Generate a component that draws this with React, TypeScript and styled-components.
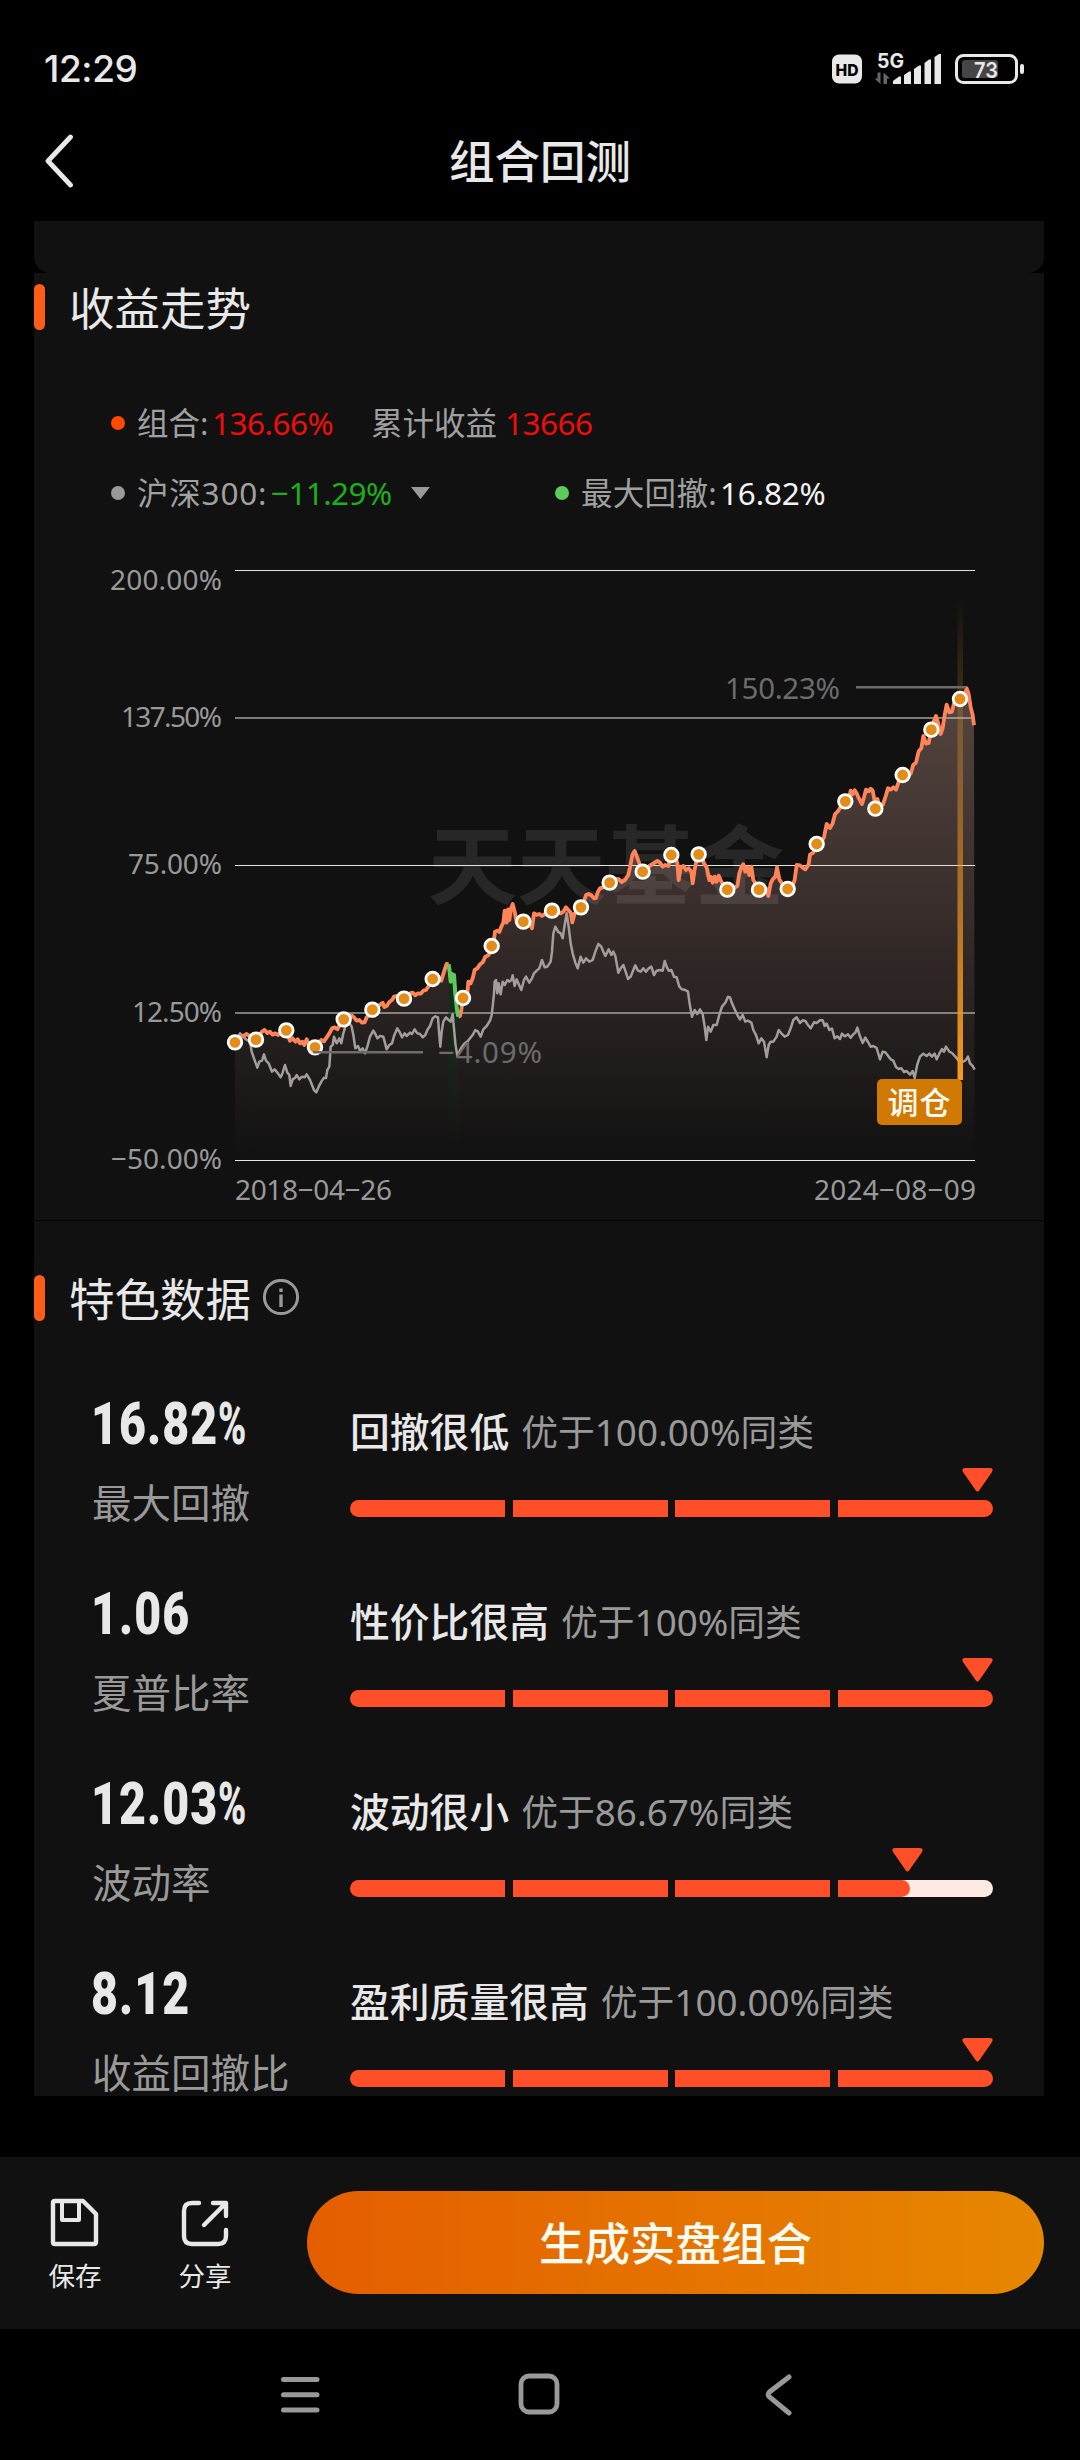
import React from "react";
import styled, { createGlobalStyle } from "styled-components";

const GlobalStyle = createGlobalStyle`
  * { box-sizing: border-box; }
  html, body { margin: 0; padding: 0; background: #000; }
  body {
    font-family: "Noto Sans", "Noto Sans CJK SC", sans-serif;
    color: #e8e8e8;
  }
`;

const Screen = styled.div`
  width: 1080px;
  height: 2460px;
  background: #000;
  display: flex;
  flex-direction: column;
  overflow: hidden;
`;

const StatusBar = styled.div`
  height: 120px;
  padding: 17px 54px 0 44px;
  display: flex;
  align-items: center;
  justify-content: space-between;
`;

const Clock = styled.span`
  font-family: Inter, sans-serif;
  font-size: 37px;
  font-weight: 500;
  letter-spacing: -0.4px;
  line-height: 40px;
`;

const Header = styled.header`
  height: 101px;
  padding: 0 45px 20px;
  display: grid;
  grid-template-columns: 120px 1fr 120px;
  align-items: center;
`;

const PageTitle = styled.h1`
  margin: 0;
  font-size: 45.5px;
  line-height: 60px;
  font-weight: 500;
  text-align: center;
`;

const Scroll = styled.main`
  height: 1875px;
  padding: 0 36px 0 34px;
  flex: none;
`;

const CardTail = styled.div`
  height: 52px;
  background: #111;
  border-radius: 0 0 16px 16px;
`;

const Section = styled.section<{ $top: number }>`
  background: #111;
  padding-top: ${(p) => p.$top}px;
`;

const Divider = styled.div`
  height: 1px;
  background: #000;
`;

const SectionHead = styled.div`
  height: 46px;
  display: flex;
  align-items: center;
`;

const Accent = styled.span`
  width: 11px;
  height: 46px;
  border-radius: 5.5px;
  background: #ff5c17;
  margin-right: 24px;
`;

const SectionTitle = styled.h2`
  margin: 0 11px 0 0;
  padding-top: 2px;
  font-size: 45.5px;
  font-weight: 400;
  line-height: 46px;
`;

const Legend = styled.div`
  padding: 68px 0 22px 77px;
  display: grid;
  row-gap: 20px;
`;

const LegendRow = styled.div`
  height: 50px;
  display: flex;
  align-items: center;
  font-size: 31.5px;
  line-height: 50px;
  white-space: pre;
`;

const Dot = styled.i<{ $color: string }>`
  width: 14px;
  height: 14px;
  border-radius: 50%;
  background: ${(p) => p.$color};
  margin-right: 12px;
`;

const LegendItem = styled.div<{ $width?: number }>`
  display: flex;
  align-items: center;
  width: ${(p) => (p.$width ? `${p.$width}px` : "auto")};
`;

const LegendName = styled.span<{ $width: number; $spacing?: number }>`
  color: #a0a0a0;
  width: ${(p) => p.$width}px;
  letter-spacing: ${(p) => p.$spacing ?? 0}px;
`;

const LegendValue = styled.span<{ $color: string; $spacing?: number }>`
  color: ${(p) => p.$color};
  letter-spacing: ${(p) => p.$spacing ?? -0.5}px;
  margin-right: 19px;
`;

const ChartSvg = styled.svg`
  display: block;
  font-family: "Noto Sans", "Noto Sans CJK SC", sans-serif;
`;

const Metrics = styled.div`
  padding: 68px 51px 0 58px;
`;

const Metric = styled.div`
  height: 190px;
  display: grid;
  grid-template-columns: 258px 643px;

  &:last-child { height: 137px; }
`;

const Value = styled.div`
  height: 68px;
  line-height: 69px;
  margin-left: -1px;
  font-family: Roboto, sans-serif;
  font-size: 60px;
  font-weight: 900;
  letter-spacing: 1.4px;
  white-space: nowrap;
  transform: scaleX(0.775);
  transform-origin: left center;
`;

const Percent = styled.span`
  display: inline-block;
  transform: scaleX(0.82);
  transform-origin: left center;
`;

const Label = styled.div`
  margin-top: 23px;
  height: 46px;
  line-height: 46px;
  font-size: 39.5px;
  color: #999;
  white-space: nowrap;
`;

const Verdict = styled.div`
  margin-top: 15px;
  height: 56px;
  display: flex;
  align-items: center;
  gap: 12px;
  line-height: 56px;
  white-space: nowrap;
`;

const VerdictTitle = styled.strong`
  font-size: 39.8px;
  font-weight: 500;
`;

const VerdictNote = styled.span`
  font-size: 36.8px;
  color: #999;
`;

const PointerTrack = styled.div`
  margin-top: 8px;
  height: 24px;
  display: flex;
`;

const Bar = styled.div`
  margin-top: 8px;
  height: 17px;
  border-radius: 8.5px;
  overflow: hidden;
  display: grid;
  grid-template-columns: repeat(4, 155px);
  justify-content: space-between;
`;

const Segment = styled.div`
  background: #fdebe3;
`;

const Fill = styled.div<{ $partial: boolean }>`
  height: 17px;
  background: #ff4f28;
  border-radius: ${(p) => (p.$partial ? "0 8.5px 8.5px 0" : "0")};
`;

const ActionBar = styled.footer`
  margin-top: 61px;
  height: 172px;
  flex: none;
  background: #111;
  padding: 34px 36px 0 46px;
  display: flex;
`;

const Action = styled.div<{ $gap: number }>`
  width: 58px;
  margin-right: ${(p) => p.$gap}px;
  display: flex;
  flex-direction: column;
  align-items: center;
  font-size: 26.5px;
  line-height: 36px;
  white-space: nowrap;

  svg { margin: 5px 0 8px; }
`;

const PrimaryButton = styled.button`
  width: 737px;
  height: 103px;
  border: 0;
  padding: 0 0 3px;
  border-radius: 52px;
  background: linear-gradient(90deg, #e45e00, #e68700);
  color: #fffaf0;
  font-family: inherit;
  font-size: 45.5px;
  font-weight: 500;
`;

const NavBar = styled.nav`
  height: 131px;
  padding: 0 286px 0 278px;
  display: grid;
  grid-template-columns: 238px 1fr 30px;
  align-items: center;
`;

/* Curve samples, three units per pixel, counted from the plot's (220, 780). */
const BEFORE_DROP =
  "45,787 62,772 80,762 95,772 108,779 118,765 126,755 134,750 142,759 150,755 158,764 166,760 174,765 182,758 190,762 199,751 205,770 210,782 218,775 226,785 233,778 240,790 247,785 253,795 260,778 266,792 274,790 285,802 296,788 304,780 312,784 320,772 328,760 336,745 344,742 352,748 360,735 371,718 385,712 395,706 402,712 410,722 418,720 426,728 434,727 440,712 448,705 457,689 470,685 480,674 488,668 493,681 500,678 508,666 516,660 522,650 532,648 542,645 552,656 560,650 570,640 578,638 586,646 594,640 602,641 610,632 618,630 626,618 638,597 650,600 658,596 664,602 672,575 680,552 686,553";
const DROP = "686,553 689,575 692,605 696,582 699,600 702,585 706,640 711,690 715,710";
const AFTER_DROP =
  "715,710 720,708 724,690 729,654 735,660 742,640 745,605 752,610 758,595 764,570 772,565 780,553 788,547 796,530 806,525 815,498 822,478 825,455 832,452 838,456 844,440 850,428 854,392 860,428 864,388 868,420 873,385 878,372 884,395 890,428 910,425 920,428 930,430 936,445 942,400 950,405 958,402 966,408 974,402 984,405 996,392 1010,397 1022,400 1030,395 1038,382 1045,390 1052,398 1057,427 1064,400 1072,395 1083,382 1090,370 1098,345 1106,342 1114,346 1122,355 1128,354 1134,335 1140,325 1150,322 1160,315 1169,308 1182,298 1195,297 1205,306 1215,300 1225,285 1230,262 1237,225 1244,213 1250,228 1256,245 1262,262 1268,275 1278,268 1288,258 1298,252 1305,247 1312,243 1320,248 1328,260 1335,255 1345,258 1354,225 1366,232 1372,250 1376,300 1382,262 1390,258 1398,270 1406,265 1414,275 1418,310 1424,268 1430,240 1436,223 1446,232 1452,250 1460,262 1468,300 1472,290 1478,308 1484,290 1490,305 1496,287 1502,300 1508,312 1522,329 1535,325 1545,322 1552,318 1558,280 1564,262 1570,253 1576,275 1582,262 1588,285 1594,260 1600,300 1608,312 1617,329 1630,320 1638,325 1645,348 1652,310 1658,298 1666,290 1671,262 1678,298 1686,310 1694,325 1703,327 1716,322 1724,300 1730,255 1740,256 1748,263 1756,268 1766,253 1770,224 1780,218 1790,192 1802,187 1812,172 1820,132 1830,144 1838,130 1845,103 1855,92 1865,75 1876,64 1888,52 1892,32 1898,43 1904,31 1910,40 1916,54 1926,72 1932,52 1938,29 1946,34 1952,26 1958,32 1964,63 1972,57 1978,75 1988,75 1996,52 2004,25 2012,29 2020,22 2028,29 2036,6 2048,-15 2060,-17 2072,-19 2080,-46 2088,-52 2096,-86 2104,-95 2110,-132 2118,-109 2126,-111 2134,-151 2142,-178 2148,-192 2154,-172 2162,-138 2168,-155 2174,-195 2180,-226 2188,-203 2196,-205 2202,-230 2210,-233 2220,-243 2232,-252 2240,-275 2246,-258 2252,-218 2258,-195 2262,-164";
const INDEX =
  "45,787 52,775 60,760 68,768 78,778 90,785 95,815 102,835 112,863 118,845 126,842 132,823 138,842 146,850 156,875 164,868 174,880 182,892 188,878 195,855 202,878 208,885 212,918 218,898 226,893 230,885 238,898 246,890 254,892 260,883 270,900 276,915 282,930 289,937 296,920 304,905 312,893 318,894 322,870 328,860 332,800 338,795 342,770 350,790 358,775 364,790 370,760 376,740 388,728 395,740 400,765 406,805 414,798 420,812 428,805 435,820 442,800 450,770 460,752 466,762 472,775 480,768 490,770 500,808 508,795 516,790 522,768 532,745 540,758 546,772 554,760 560,768 570,758 576,762 584,748 592,760 600,762 608,772 616,765 622,750 630,738 638,715 646,709 654,712 657,755 661,800 665,755 670,725 678,712 686,720 692,725 698,702 702,745 706,790 712,828 718,815 726,800 734,790 742,785 750,775 758,765 766,750 774,755 782,770 790,748 800,738 810,722 815,705 818,680 822,640 824,605 828,600 832,640 836,610 842,643 848,605 854,615 862,600 868,605 874,600 878,586 884,618 890,598 896,612 904,630 912,600 918,590 928,608 936,595 942,580 950,572 958,565 966,540 974,562 982,560 992,545 996,515 1000,460 1006,440 1014,455 1022,460 1028,475 1034,435 1040,400 1046,440 1052,490 1058,520 1066,548 1073,565 1082,530 1090,548 1098,535 1108,545 1118,540 1126,515 1135,492 1144,500 1150,515 1156,528 1166,508 1174,525 1180,515 1186,528 1195,578 1202,565 1210,555 1218,578 1224,597 1232,590 1240,570 1246,556 1254,572 1262,575 1270,565 1278,575 1286,565 1294,560 1302,585 1310,572 1320,570 1328,572 1334,543 1340,560 1346,572 1354,570 1362,590 1370,592 1378,620 1386,628 1396,630 1404,635 1408,665 1416,710 1424,690 1432,702 1440,688 1448,702 1454,740 1459,780 1464,740 1472,755 1480,735 1490,735 1498,705 1506,680 1516,668 1524,650 1530,652 1536,670 1544,688 1552,705 1560,718 1568,705 1576,725 1584,722 1594,728 1600,750 1608,765 1616,790 1624,775 1632,785 1640,832 1646,795 1652,785 1660,785 1670,770 1676,750 1684,760 1694,770 1704,765 1712,745 1720,720 1730,712 1740,729 1748,721 1756,723 1764,735 1772,745 1782,727 1790,729 1800,721 1808,721 1814,738 1820,731 1828,750 1836,746 1844,775 1852,769 1860,777 1866,761 1874,769 1884,763 1892,773 1900,763 1906,758 1912,743 1920,769 1928,789 1936,773 1944,786 1952,800 1960,798 1970,804 1980,838 1988,815 1996,817 2004,827 2012,838 2020,842 2028,861 2036,867 2044,865 2052,876 2060,873 2070,884 2078,873 2084,894 2092,853 2100,830 2110,821 2120,828 2128,821 2136,830 2144,821 2150,838 2158,821 2166,807 2172,815 2178,800 2188,815 2196,819 2206,830 2216,842 2226,846 2236,842 2244,830 2250,850 2258,858 2264,869";

const REBALANCES = [
  [45, 787], [108, 779], [199, 751], [285, 802], [371, 718], [457, 689], [552, 656], [638, 597],
  [729, 654], [815, 498], [910, 425], [996, 392], [1083, 382], [1169, 308], [1268, 275], [1354, 225],
  [1436, 223], [1522, 329], [1617, 329], [1703, 327], [1790, 192], [1876, 64], [1966, 86],
  [2048, -15], [2134, -151], [2220, -243],
];

const AXIS = [
  { label: "200.00%", y: 570.5, base: 590, width: 112 },
  { label: "137.50%", y: 718, base: 726.5, width: 101 },
  { label: "75.00%", y: 865.5, base: 873.5, width: 94 },
  { label: "12.50%", y: 1013, base: 1021.5, width: 90 },
  { label: "−50.00%", y: 1160.5, base: 1169, width: 111 },
];

function TrendChart() {
  return (
    <ChartSvg width="1010" height="680" viewBox="34 540 1010 680">
      <defs>
        <linearGradient id="area" gradientUnits="userSpaceOnUse" x1="0" y1="-280" x2="0" y2="1140">
          <stop offset="0" stopColor="#ffc4ae" stopOpacity="0.29" />
          <stop offset="0.5" stopColor="#ffc0b0" stopOpacity="0.155" />
          <stop offset="1" stopColor="#ffc4ae" stopOpacity="0" />
        </linearGradient>
        <linearGradient id="dropBand" x1="0" y1="0" x2="0" y2="1">
          <stop offset="0" stopColor="#0c3018" stopOpacity="0.75" />
          <stop offset="1" stopColor="#0c3018" stopOpacity="0" />
        </linearGradient>
        <linearGradient id="beam" x1="0" y1="0" x2="0" y2="1">
          <stop offset="0" stopColor="#f79a20" stopOpacity="0" />
          <stop offset="1" stopColor="#f79a20" />
        </linearGradient>
      </defs>

      <text x="428" y="898" fontSize="86" fontWeight="700" fill="#fff" fillOpacity="0.095" textLength="356" lengthAdjust="spacingAndGlyphs">
        天天基金
      </text>

      {AXIS.map((a) => (
        <g key={a.label}>
          <text x={222 - a.width} y={a.base} fontSize="28" fill="#999" textLength={a.width}>
            {a.label}
          </text>
          <line x1="235" x2="975" y1={a.y} y2={a.y} stroke="#e4e4e4" strokeWidth="1.1" />
        </g>
      ))}

      <g transform="translate(220 780) scale(0.33333)" fill="none" strokeLinejoin="round">
        <path d={`M45,1140 L${BEFORE_DROP} ${DROP} ${AFTER_DROP} L2264,1140Z`} fill="url(#area)" />
        <path d="M685,553 L692,605 L702,590 L715,710 V1100 H685Z" fill="url(#dropBand)" />
        <polyline points={INDEX} stroke="#a39e9b" strokeWidth="7.5" />
        <polyline points={BEFORE_DROP} stroke="#ff8458" strokeWidth="11.5" />
        <polyline points={AFTER_DROP} stroke="#ff8458" strokeWidth="11.5" />
        <polyline points={DROP} stroke="#5fca5c" strokeWidth="12" />
      </g>

      <rect x="957.5" y="600" width="5.5" height="480" fill="url(#beam)" />

      {REBALANCES.map(([x, y]) => (
        <circle key={x} cx={220 + x / 3} cy={780 + y / 3} r="6.8" fill="#e38c18" stroke="#fff" strokeWidth="2.8" />
      ))}

      <g fill="#6c6c6c" stroke="none" fontSize="29.5">
        <rect x="856" y="686" width="110" height="2.5" />
        <text x="725" y="699" textLength="115">150.23%</text>
        <rect x="313" y="1051" width="110" height="2.5" />
        <text x="438" y="1063" textLength="104">−4.09%</text>
      </g>

      <rect x="877" y="1079" width="85" height="46" rx="5" fill="#d17905" />
      <text x="919.5" y="1113.5" fontSize="31" fill="#fffaf0" textAnchor="middle" fontWeight="500" letterSpacing="1">
        调仓
      </text>

      <g fontSize="28" fill="#999">
        <text x="235" y="1200" textLength="157">2018−04−26</text>
        <text x="814" y="1200" textLength="162">2024−08−09</text>
      </g>
    </ChartSvg>
  );
}

const METRICS = [
  { value: "16.82", percent: true, label: "最大回撤", verdict: "回撤很低", note: "优于100.00%同类", rank: 100 },
  { value: "1.06", percent: false, label: "夏普比率", verdict: "性价比很高", note: "优于100%同类", rank: 100 },
  { value: "12.03", percent: true, label: "波动率", verdict: "波动很小", note: "优于86.67%同类", rank: 86.67 },
  { value: "8.12", percent: false, label: "收益回撤比", verdict: "盈利质量很高", note: "优于100.00%同类", rank: 100 },
];

function RankBar({ rank }: { rank: number }) {
  const pointer = Math.min((rank / 100) * 643 - 15, 643 - 31);
  return (
    <>
      <PointerTrack>
        <svg width="31" height="24" viewBox="0 0 31 24" style={{ marginLeft: pointer }}>
          <path d="M3 0H28Q32 0 30 4L17.5 22Q15.5 25 13.5 22L1 4Q-1 0 3 0Z" fill="#ff4f28" />
        </svg>
      </PointerTrack>
      <Bar>
        {[0, 1, 2, 3].map((i) => {
          const part = Math.max(0, Math.min(1, (rank - i * 25) / 25));
          return (
            <Segment key={i}>
              <Fill $partial={part < 1} style={{ width: `${part * 100}%` }} />
            </Segment>
          );
        })}
      </Bar>
    </>
  );
}

function StatusIcons() {
  return (
    <svg width="194" height="40" viewBox="832 48 194 40" fontFamily="Inter, sans-serif">
      <rect x="832" y="53.5" width="30" height="29" rx="7" fill="#e8e8e8" />
      <text x="847" y="74.5" fontSize="16.5" fontWeight="800" fill="#000" textAnchor="middle" textLength="23" lengthAdjust="spacingAndGlyphs">HD</text>
      <text x="877" y="66.5" fontSize="20" fontWeight="700" fill="#e8e8e8" textLength="27" lengthAdjust="spacingAndGlyphs">5G</text>
      <path d="M880.5 71.5V83L874.5 77.5H877.5V71.5ZM883.5 83V71.5L890 77.5H887V83Z" fill="#666" />
      <g fill="#e8e8e8">
        <path d="M893 83V80L899 75.5H901V83Z" />
        <path d="M904 83V74L909 70.5H911V83Z" />
        <path d="M914 83V68L919 64.5H921V83Z" />
        <path d="M924.5 83V62L929 58.5H931V83Z" />
        <path d="M934.5 83V56L939 53H941V83Z" />
        <rect x="1020" y="63" width="4" height="10" rx="2" />
      </g>
      <rect x="956.5" y="54.5" width="60" height="27" rx="7" fill="none" stroke="#e8e8e8" strokeWidth="3" />
      <rect x="962" y="59" width="36" height="18" rx="3" fill="#454545" />
      <text x="974" y="77" fontSize="22" fontWeight="600" fill="#e8e8e8" textLength="24" lengthAdjust="spacingAndGlyphs">73</text>
    </svg>
  );
}

export default function App() {
  return (
    <Screen>
      <GlobalStyle />
      <StatusBar>
        <Clock>12:29</Clock>
        <StatusIcons />
      </StatusBar>
      <Header>
        <svg width="28" height="54" viewBox="0 0 28 54">
          <path d="M25.5 3L3 27L25.5 51" fill="none" stroke="#e8e8e8" strokeWidth="4.8" strokeLinecap="round" strokeLinejoin="round" />
        </svg>
        <PageTitle>组合回测</PageTitle>
      </Header>

      <Scroll>
        <CardTail />
        <Section $top={11}>
          <SectionHead>
            <Accent />
            <SectionTitle>收益走势</SectionTitle>
          </SectionHead>
          <Legend>
            <LegendRow>
              <LegendItem $width={260}>
                <Dot $color="#ff4a00" />
                <LegendName $width={75}>组合:</LegendName>
                <LegendValue $color="#ee0d0d">136.66%</LegendValue>
              </LegendItem>
              <LegendName $width={134}>累计收益</LegendName>
              <LegendValue $color="#ee0d0d">13666</LegendValue>
            </LegendRow>
            <LegendRow>
              <LegendItem $width={444}>
                <Dot $color="#999" />
                <LegendName $width={134} $spacing={0.8}>沪深300:</LegendName>
                <LegendValue $color="#1cae1c" $spacing={-0.6}>−11.29%</LegendValue>
                <svg width="19" height="12" viewBox="0 0 19 12">
                  <path d="M0 0H19L9.5 12Z" fill="#999" />
                </svg>
              </LegendItem>
              <LegendItem>
                <Dot $color="#5ecb5b" />
                <LegendName $width={139} $spacing={0.3}>最大回撤:</LegendName>
                <LegendValue $color="#f2f2f2" $spacing={-0.2}>16.82%</LegendValue>
              </LegendItem>
            </LegendRow>
          </Legend>
          <TrendChart />
        </Section>
        <Divider />
        <Section $top={54}>
          <SectionHead>
            <Accent />
            <SectionTitle>特色数据</SectionTitle>
            <svg width="38" height="38" viewBox="0 0 38 38">
              <circle cx="19" cy="18" r="16.6" fill="none" stroke="#999" strokeWidth="3" />
              <rect x="17.3" y="15.5" width="3.4" height="12.5" fill="#999" />
              <rect x="17.3" y="9.5" width="3.4" height="3.5" fill="#999" />
            </svg>
          </SectionHead>
          <Metrics>
            {METRICS.map((m) => (
              <Metric key={m.label}>
                <div>
                  <Value>
                    {m.value}
                    {m.percent && <Percent>%</Percent>}
                  </Value>
                  <Label>{m.label}</Label>
                </div>
                <div>
                  <Verdict>
                    <VerdictTitle>{m.verdict}</VerdictTitle>
                    <VerdictNote>{m.note}</VerdictNote>
                  </Verdict>
                  <RankBar rank={m.rank} />
                </div>
              </Metric>
            ))}
          </Metrics>
        </Section>
      </Scroll>

      <ActionBar>
        <Action $gap={72}>
          <svg width="54" height="54" viewBox="0 0 54 54" fill="none" stroke="#e8e8e8" strokeWidth="4.4" strokeLinejoin="round">
            <path d="M7 5H35L48 18V46Q48 48 46 48H7Q5 48 5 46V7Q5 5 7 5Z" />
            <path d="M14 5V24H31V5" strokeWidth="4" />
          </svg>
          保存
        </Action>
        <Action $gap={73}>
          <svg width="54" height="54" viewBox="0 0 54 54" fill="none" stroke="#e8e8e8" strokeWidth="4.4" strokeLinecap="round" strokeLinejoin="round">
            <path d="M21 7H14Q6 7 6 15V40Q6 48 14 48H40Q48 48 48 40V34" />
            <path d="M35 7H48V20M47 8L26 29" />
          </svg>
          分享
        </Action>
        <PrimaryButton>生成实盘组合</PrimaryButton>
      </ActionBar>

      <NavBar>
        <svg width="45" height="45" viewBox="0 0 45 45" stroke="#999" strokeWidth="5" strokeLinecap="round">
          <path d="M5.5 7.5H39M5.5 22.8H39M5.5 38H39" />
        </svg>
        <svg width="45" height="45" viewBox="0 0 45 45" fill="none" stroke="#999" strokeWidth="4.8">
          <rect x="5" y="4" width="36" height="36" rx="8" />
        </svg>
        <svg width="30" height="45" viewBox="0 0 30 45" fill="none" stroke="#999" strokeWidth="5" strokeLinecap="round">
          <path d="M25 5L5.5 20Q3 22.5 5.5 25L25 41" />
        </svg>
      </NavBar>
    </Screen>
  );
}
